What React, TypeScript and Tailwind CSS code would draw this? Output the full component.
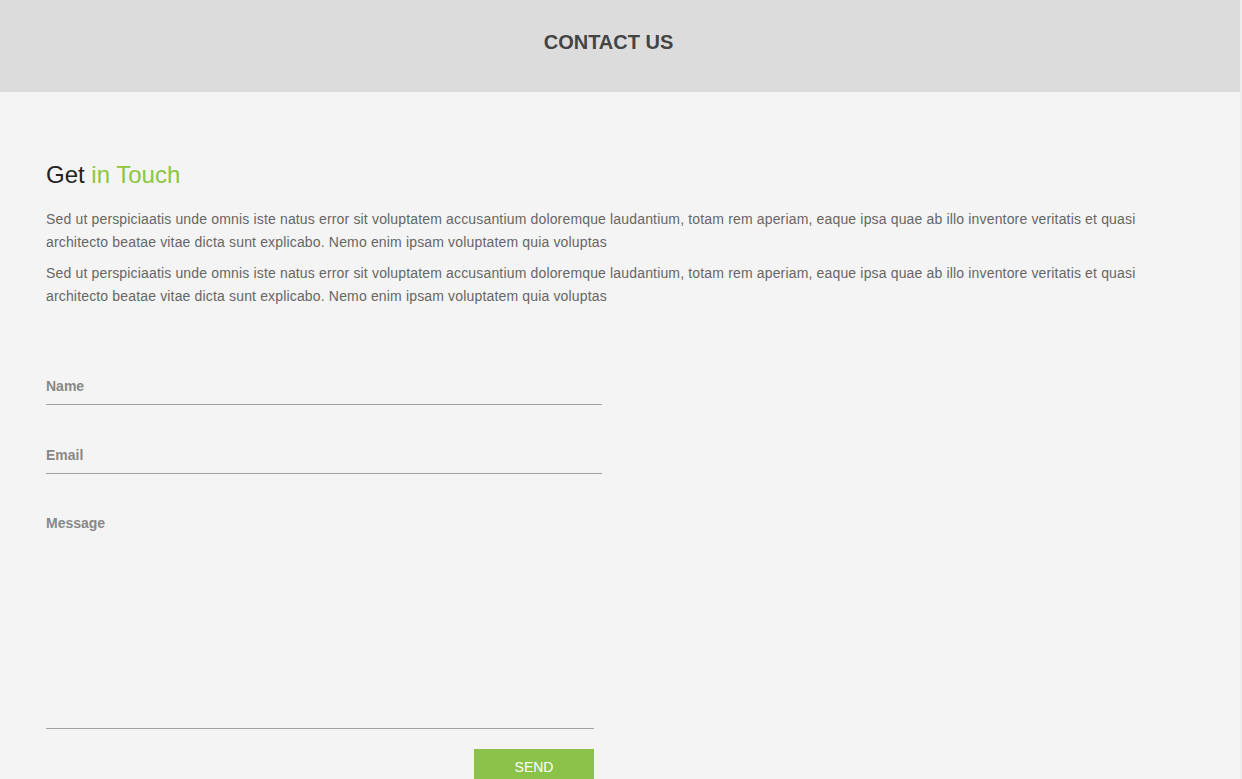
import React from "react";

export default function App() {
  const para =
    "Sed ut perspiciaatis unde omnis iste natus error sit voluptatem accusantium doloremque laudantium, totam rem aperiam, eaque ipsa quae ab illo inventore veritatis et quasi architecto beatae vitae dicta sunt explicabo. Nemo enim ipsam voluptatem quia voluptas";
  return (
    <div
      className="flex min-h-[779px] w-full bg-[#ededed]"
      style={{ fontFamily: '"Liberation Sans", Arial, sans-serif' }}
    >
      <div className="w-[1240px] shrink-0 bg-[#f4f4f4]">
        <header className="flex h-[92px] items-center justify-center bg-[#dcdcdc] pb-[8px] pr-[23px]">
          <h1 className="text-[20px] font-bold leading-[23px] text-[#444]">CONTACT US</h1>
        </header>
        <main className="px-[46px] pt-[69px]">
          <h2 className="text-[24px] leading-[28px] text-[#222]">
            Get <span className="text-[#8cc63e]">in Touch</span>
          </h2>
          <div className="mt-[19px] w-[1148px] text-[14px] leading-[23px] tracking-[0.16px] text-[#666]">
            <p>{para}</p>
            <p className="mt-[8px]">{para}</p>
          </div>
          <form className="mt-[70px] flex flex-col" onSubmit={(e) => e.preventDefault()}>
            <input
              type="text"
              placeholder="Name"
              className="h-[27px] w-[556px] border-b border-[#a0a0a0] bg-transparent pb-[10px] text-[14px] leading-[16px] font-bold text-[#666] outline-none placeholder:text-[#888]"
            />
            <input
              type="email"
              placeholder="Email"
              className="mt-[42px] h-[27px] w-[556px] border-b border-[#a0a0a0] bg-transparent pb-[10px] text-[14px] leading-[16px] font-bold text-[#666] outline-none placeholder:text-[#888]"
            />
            <textarea
              placeholder="Message"
              className="mt-[41px] h-[214px] w-[548px] resize-none border-b border-[#a0a0a0] bg-transparent text-[14px] leading-[16px] font-bold text-[#666] outline-none placeholder:text-[#888]"
            />
            <div className="mt-[20px] flex w-[548px] justify-end">
              <button
                type="submit"
                className="h-[36px] w-[120px] bg-[#8bc34a] text-[14px] leading-[16px] text-white"
              >
                SEND
              </button>
            </div>
          </form>
        </main>
      </div>
    </div>
  );
}
